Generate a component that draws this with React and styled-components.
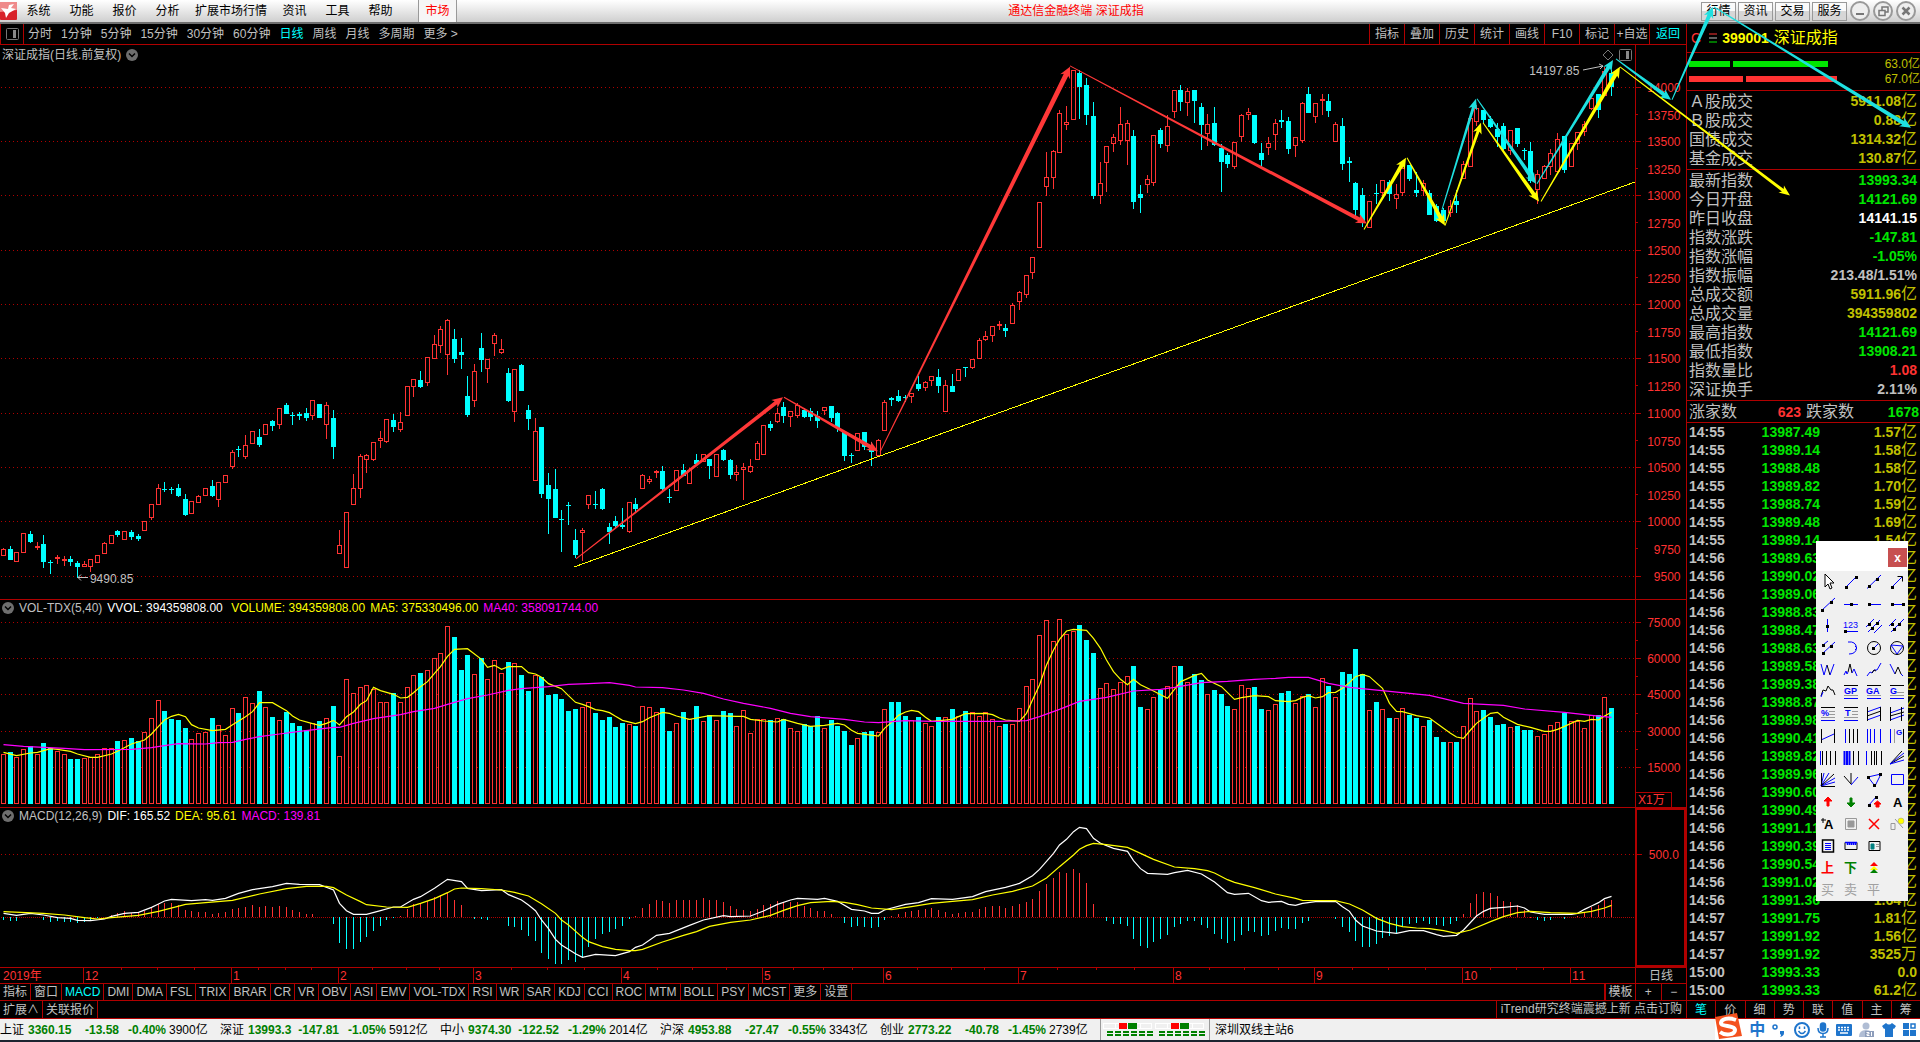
import React from 'react'
import styled, { createGlobalStyle } from 'styled-components'

const GlobalStyle = createGlobalStyle`
    *{
        box-sizing:border-box;
    }
    html, body, #root{
        height:100%;
        margin:0;
    }
    body{
        background:#000;
        color:#c0c0c0;
        font:12px/16px "Liberation Sans", "Noto Sans CJK SC", sans-serif;
        font-kerning:none;
        overflow:hidden;
    }
    button{
        font:inherit;
        font-kerning:none;
        color:inherit;
        background:none;
        border:0;
        padding:0;
        margin:0;
        white-space:nowrap;
    }
    a{
        color:inherit;
        text-decoration:none;
    }
    svg{
        display:block;
    }
`;

const RED = '#ff3232'
const LINE = '#b00000'
const CYAN = '#00ffff'
const OLIVE = '#c0c000'
const GREEN = '#00e600'
const GREY = '#c0c0c0'

/* ---------- data ---------- */

// r = up bar, c = down bar, number is the top of the volume column
const volumes = `r492 c486 r501 r478 c470 r492 c459 c474 r485 r492 c507 c507 r505 r503 r492 r475 r475 c453 r451 c444
c453 r427 r386 r331 c363 c387 c390 c414 r448 r430 r427 c384 r406 r436 r355 c369 r322 r340 c303 r352
c381 r391 c366 c399 c408 c421 r400 c393 r385 c348 r499 r268 r310 r292 r286 r298 r337 r337 c309 r337
r292 r256 c249 r241 r205 r190 r109 c141 c240 c195 r253 c204 r268 r211 r250 c216 r220 c255 c303 r256
c261 c315 c312 c327 c363 c357 r352 r337 c369 c390 c381 c411 c399 r403 c408 r349 r352 r367 c354 c423
r400 c366 r388 c348 r394 c376 r391 c363 c369 r409 r361 r430 r388 r388 c391 r385 c387 r415 r424 c403
c410 c378 r415 c390 c408 c423 c465 r445 c426 c423 r427 r358 c336 c336 c378 r391 c381 r400 r409 c381
r382 c357 r380 c363 r367 r379 r367 r388 r409 c402 r403 r355 r289 r268 r136 r91 r154 r88 r133 r124
c105 c150 c189 r295 r280 r298 r277 r259 c228 c351 r358 r322 c300 r289 r229 c228 r277 c252 c270 r313
c300 c312 c348 r358 r286 r295 c291 c357 r361 r343 c309 c303 r340 r319 c312 r352 r265 c288 r322 c246
c252 c177 c253 r361 c336 r358 c384 r385 r355 c375 c384 r409 c390 c441 c456 r457 c456 r409 r325 r364
c360 c381 c405 c402 r412 c408 c420 c420 r439 r433 r406 r397 c369 r394 r394 r415 r376 c375 r322 c354`
    .split(/\s+/)
    .map((v) => ({ up: v[0] === 'r', top: Number(v.slice(1)) }))

// high,open/close top,bottom,low for each bar; every block has its own origin
const candleBlocks = [
    [300, `744,748,767,767 738,747,780,780 757,757,785,785 700,700,758,758 693,702,726,729 726,738,741,750 705,732,786,804
780,786,789,822 765,771,776,792 768,779,782,798 768,777,786,798 783,789,801,834 783,792,798,801 778,778,800,816
766,766,788,788 726,730,759,762 706,706,731,731 690,693,705,711 694,694,717,720 690,696,711,720 702,708,717,723
664,664,692,692 613,613,653,660 552,565,614,614 546,567,570,576 561,567,570,582 552,564,588,591 582,597,645,648
604,604,641,641 585,589,608,608 565,565,587,590 540,558,588,591 547,547,599,621 526,526,548,548 450,457,500,507
438,447,450,471 405,436,470,477 394,394,431,431 387,411,435,441 373,373,404,404 360,363,378,393 325,325,374,387
309,315,342,342 336,345,348,375 336,342,348,360 324,339,354,363 301,301,347,360 312,312,354,354 306,316,374,417
330,354,441,477 690,736,761,761 637,637,803,803 522,565,614,614 462,469,566,594 462,466,479,519 427,427,479,483
393,415,422,444 358,358,425,429 342,360,381,396 336,367,389,396 259,259,347,347 238,238,260,291 213,240,261,264
172,172,248,258 105,133,176,176 78,88,137,159 57,61,164,225 87,117,177,189 114,156,165,207 228,288,345,351
192,213,302,321 99,144,180,216 178,178,206,249 99,106,131,168 117,148,158,162 204,219,303,306 208,208,335,366
192,195,273,273 315,330,357,390 354,394,542,542 381,381,582,594 519,555,597,702 507,567,654,654 630,657,660,756
606,615,618,675 687,720,765,774 684,691,698,783 586,586,612,627 573,612,615,627 564,567,627,630 669,681,696,732
648,663,678,684 624,675,681,687 607,607,695,699 594,612,627,640`],
    [360, `342,346,384,387 348,357,364,372 330,333,338,354 318,333,387,396 387,411,414,429 331,331,390,393 312,330,348,348
325,331,369,372 282,300,312,312 283,283,305,305 297,297,318,357 283,283,348,351 267,270,300,303 297,300,345,357
315,336,342,363 309,322,328,420 297,319,335,339 243,250,299,299 196,196,284,284 183,192,204,213 144,160,185,189
126,141,168,189 154,154,170,201 130,136,167,174 144,150,171,174 144,153,171,183 153,168,183,204 142,142,152,165
138,138,174,186 156,159,204,216 213,216,288,303 279,287,290,309 220,220,272,272 216,216,261,270 246,264,276,318
237,241,286,286 120,127,212,212 111,114,120,138 90,108,123,126 105,112,115,126 100,100,110,129 48,72,87,93
63,67,83,93 49,49,62,78 27,51,78,99 60,76,155,155 42,78,96,96 28,28,60,63 21,21,24,51`],
    [40, `958,958,983,987 894,901,956,956 873,889,899,903 859,859,887,906 843,853,856,870 852,864,873,891 789,796,851,851
753,757,785,810 706,706,764,774 652,652,698,717 487,487,623,623 336,412,440,468 330,334,413,447 210,220,338,338
198,246,252,270 91,91,239,239 90,99,141,237 114,135,225,255 186,228,468,477 366,430,467,492 319,319,368,456
282,292,311,336 201,253,302,315 240,250,302,375 270,288,486,507 435,462,474,519 405,418,434,459 286,286,428,438
264,270,312,324 225,259,317,336`],
    [50, `121,121,185,204 105,120,156,183 114,124,158,198 120,120,153,219 159,171,225,300 192,223,251,288 171,219,285,288
282,294,336,426 309,315,342,354 277,277,350,357 192,196,260,276 174,187,194,210 195,195,279,282 279,309,330,348
261,280,293,315 207,220,254,300 180,210,216,234 201,213,297,312 262,262,287,321 156,160,272,279 111,132,189,189
160,160,200,219 132,148,151,195 132,153,183,201 217,223,275,275 204,228,342,360 321,333,339,396 396,399,480,498
414,435,513,531 454,454,533,533 402,429,432,462 391,391,428,440 390,396,432,453 402,433,445,477 345,355,428,440
345,345,387,393 366,420,429,441 390,400,422,438 420,429,495,495 462,470,513,517 474,480,513,520 450,469,488,501
420,453,465,489 333,343,386,386 205,205,350,350 165,175,215,230 180,180,210,222 198,207,231,234 219,237,261,291
219,228,297,300 241,241,301,315 234,234,282,291 294,300,305,330 276,303,393,400 360,374,419,462 345,349,386,386
297,310,350,375 249,268,364,364 258,258,360,369 280,280,350,350 247,247,280,300 213,223,245,258 145,145,176,180
132,132,180,204 52,65,135,135 60,69,111,138`],
]

const candles = candleBlocks.flatMap(([origin, rows]) =>
    rows.split(/\s+/).map((row) => row.split(',').map((n) => origin * 3 + Number(n)))
)

const macdBars = `991 993 993 982 982 982 991 996 993 996 996 999 996 993 985 982 974 970 963 968 967 963 955 943 940 940 946 960
963 966 966 972 969 966 957 954 951 945 951 948 951 948 951 960 966 972 972 982 982 1002 1059 1077 1077 1056 1041 1023
1008 990 984 978 957 942 942 933 921 915 909 930 945 982 987 987 990 982 982 1008 1011 1020 1038 1053 1089 1107 1122 1122
1110 1116 1101 1071 1047 1032 1026 1017 1008 987 978 954 942 930 933 939 930 930 930 930 924 930 930 936 948 957 960 963
957 945 942 933 936 936 936 948 954 963 963 972 982 999 1011 1008 1011 1014 1011 990 978 972 966 963 960 957 954 960 966
972 969 966 966 957 951 948 948 954 948 942 936 927 903 882 864 846 849 837 849 879 942 982 993 1002 1002 1008 1047 1068
1074 1056 1047 1035 1011 1002 993 993 1005 1014 1032 1047 1059 1053 1035 1023 1026 1038 1035 1023 1014 1017 1017 999 993
982 982 982 987 1011 1026 1053 1071 1071 1062 1044 1038 1029 1011 1002 999 993 1002 1005 1008 1002 993 972 939 912 906
909 918 933 936 945 960 981 990 993 990 982 987 982 979 967 951 945 930 930`.split(/\s+/).map(Number)

// "bar index,level" pairs
const ma5 = `0,487 2,497 4,489 5,487 7,476 8,478 10,484 11,492 13,502 14,502 16,492 17,484 19,462 21,450 22,432 23,409 24,390
25,379 26,373 27,380 28,404 29,414 31,422 33,418 34,404 36,380 37,365 38,338 40,338 42,362 43,378 44,390 46,401 47,406
48,400 49,391 50,405 51,380 52,366 53,343 54,332 55,292 56,302 58,313 59,324 60,322 61,308 62,290 63,275 64,250 65,230
66,199 67,178 69,176 71,208 72,232 73,226 74,238 75,230 77,230 78,248 79,252 80,262 81,281 83,296 84,317 85,337 86,343
87,350 88,359 89,362 90,368 91,379 92,391 94,401 95,395 96,383 98,367 99,370 100,378 102,388 105,377 109,379 110,379
111,388 113,393 115,396 116,388 118,400 120,409 122,406 124,400 125,405 126,421 127,430 130,438 131,415 132,397 133,376
134,366 135,361 136,365 137,382 138,394 141,388 142,380 143,371 146,370 147,374 148,384 149,390 151,394 152,370 153,330
154,285 155,225 156,180 157,148 158,123 159,118 161,121 162,145 163,175 164,210 165,245 166,268 167,284 168,268 169,284
171,303 173,325 175,275 176,266 177,256 178,250 179,270 181,290 183,328 184,323 186,317 188,320 189,332 191,335 192,332
193,322 194,317 195,324 196,320 197,308 198,307 199,295 200,278 201,260 202,253 203,260 205,295 206,340 207,364 208,365
210,377 212,384 214,415 215,430 216,441 217,445 218,420 219,400 220,385 221,370 222,367 223,382 225,403 227,412 229,424
230,424 231,418 232,409 234,391 235,394 236,388 237,390 238,378 239,367`
const ma40 = `0,464 3,469 9,475 12,479 19,478 22,473 24,467 26,461 30,462 32,458 34,457 36,448 38,440 41,432 44,424 49,412
50,412 52,400 55,386 59,374 61,365 64,355 66,343 69,326 72,315 75,301 77,296 81,290 84,283 87,281 90,278 93,286 94,291
98,293 101,300 104,310 107,327 110,340 114,355 117,370 120,380 125,388 128,396 130,398 134,392 138,394 148,394 152,392
154,380 157,358 160,334 164,322 168,303 172,298 174,292 178,278 182,274 186,268 189,265 191,262 194,262 197,280 200,292
203,298 206,304 209,310 212,316 214,326 217,340 223,346 226,357 232,367 236,376 239,382`
const dif = `0,970 2,976 4,970 6,975 8,983 10,985 11,991 13,992 15,987 16,979 18,970 20,967 22,952 23,942 24,933 25,928 28,932
30,929 31,931 33,925 35,910 37,899 40,890 42,880 44,883 47,884 49,900 50,940 51,962 52,973 54,973 56,962 58,951 59,951
61,928 62,920 64,895 66,868 68,875 69,895 71,902 74,899 75,914 77,930 78,945 79,962 80,990 81,1016 82,1048 83,1065
85,1091 86,1102 88,1093 91,1097 93,1085 94,1072 95,1065 97,1036 99,1030 102,1006 104,990 107,977 108,980 111,978 113,963
115,943 117,930 118,925 121,928 122,925 124,934 126,958 128,963 129,970 130,970 131,960 134,943 136,938 138,926 141,928
144,920 146,905 149,892 151,880 153,857 154,838 156,790 157,765 158,748 159,725 160,712 161,716 162,745 163,760 165,775
167,784 168,812 169,836 170,850 173,853 174,848 176,841 178,852 180,876 182,908 183,913 185,910 187,932 188,937 190,934
191,943 192,946 193,940 195,935 198,934 199,950 200,964 201,990 202,1008 204,1023 207,1030 209,1022 211,1022 213,1034
214,1039 216,1036 217,1020 219,978 220,964 221,955 223,952 225,948 226,954 227,966 229,973 233,973 234,970 235,958
236,948 237,938 238,926 239,919`
const dea = `0,965 6,970 9,975 12,983 14,987 16,983 20,976 23,964 27,943 30,938 34,931 38,912 42,896 45,889 48,889 49,893
51,915 53,935 54,944 57,951 60,952 62,940 64,926 66,908 67,897 68,894 71,896 74,900 76,907 78,918 80,941 82,970 83,990
84,1005 86,1042 87,1055 89,1070 91,1078 93,1082 94,1082 95,1078 98,1056 101,1036 103,1025 105,1009 108,997 111,990
114,976 116,961 118,947 120,938 123,934 125,937 127,944 129,954 132,959 135,950 138,940 141,934 144,929 147,915 150,904
153,888 155,864 157,830 159,795 160,778 161,767 162,760 164,764 167,772 169,790 171,808 174,831 177,836 179,842 180,849
182,869 183,877 186,893 189,912 192,925 193,931 198,932 200,942 202,960 204,985 206,1000 208,1010 210,1014 212,1016
214,1022 216,1030 218,1020 221,995 223,980 225,968 227,964 230,968 234,970 236,964 238,954 239,946`

const menus = ['系统', '功能', '报价', '分析', '扩展市场行情', '资讯', '工具', '帮助']
const periods = ['分时', '1分钟', '5分钟', '15分钟', '30分钟', '60分钟', '日线', '周线', '月线', '多周期', '更多 >']
const tools = ['指标', '叠加', '历史', '统计', '画线', 'F10', '标记', '+自选', '返回']
const months = [
    ['2019年', 83], ['12', 148], ['1', 107], ['2', 135], ['3', 148], ['4', 141], ['5', 121],
    ['6', 135], ['7', 155], ['8', 141], ['9', 148], ['10', 108], ['11', 65],
]
const indicators = ['指标', '窗口', 'MACD', 'DMI', 'DMA', 'FSL', 'TRIX', 'BRAR', 'CR', 'VR', 'OBV', 'ASI', 'EMV', 'VOL-TDX',
    'RSI', 'WR', 'SAR', 'KDJ', 'CCI', 'ROC', 'MTM', 'BOLL', 'PSY', 'MCST', '更多', '设置']

const turnover = [
    ['Ａ股成交', '5911.08', OLIVE, '亿'],
    ['Ｂ股成交', '0.88', OLIVE, '亿'],
    ['国债成交', '1314.32', OLIVE, '亿'],
    ['基金成交', '130.87', OLIVE, '亿'],
]
const summary = [
    ['最新指数', '13993.34', GREEN],
    ['今日开盘', '14121.69', GREEN],
    ['昨日收盘', '14141.15', '#fff'],
    ['指数涨跌', '-147.81', GREEN],
    ['指数涨幅', '-1.05%', GREEN],
    ['指数振幅', '213.48/1.51%', GREY],
    ['总成交额', '5911.96', OLIVE, '亿'],
    ['总成交量', '394359802', OLIVE],
    ['最高指数', '14121.69', GREEN],
    ['最低指数', '13908.21', GREEN],
    ['指数量比', '1.08', RED],
    ['深证换手', '2.11%', GREY],
]
const trades = [
    ['14:55', '13987.49', '1.57', '亿'], ['14:55', '13989.14', '1.58', '亿'], ['14:55', '13988.48', '1.58', '亿'],
    ['14:55', '13989.82', '1.70', '亿'], ['14:55', '13988.74', '1.59', '亿'], ['14:55', '13989.48', '1.69', '亿'],
    ['14:55', '13989.14', '1.54', '亿'],
    ...['13989.63', '13990.02', '13989.06', '13988.83', '13988.47', '13988.63', '13989.58', '13989.38', '13988.87',
        '13989.98', '13990.41', '13989.82', '13989.96', '13990.60', '13990.49', '13991.11', '13990.39', '13990.54',
        '13991.02'].map((p) => ['14:56', p, '', '亿']),
    ['14:56', '13991.36', '1.64', '亿'],
    ['14:57', '13991.75', '1.81', '亿'], ['14:57', '13991.92', '1.56', '亿'], ['14:57', '13991.92', '3525', '万'],
    ['15:00', '13993.33', '0.0', ''], ['15:00', '13993.33', '61.2', '亿'],
]
const quotes = [
    ['上证', '3360.15', '-13.58', '-0.40%', '3900亿'],
    ['深证', '13993.3', '-147.81', '-1.05%', '5912亿'],
    ['中小', '9374.30', '-122.52', '-1.29%', '2014亿'],
    ['沪深', '4953.88', '-27.47', '-0.55%', '3343亿'],
    ['创业', '2773.22', '-40.78', '-1.45%', '2739亿'],
]

/* ---------- layout ---------- */

const Screen = styled.div`
    position:relative;
    height:100vh;
    display:flex;
    flex-direction:column;
    border-bottom:2px solid #1c2430;
`;
const MenuBar = styled.header`
    height:24px;
    flex:none;
    display:flex;
    align-items:center;
    background:linear-gradient(#fff, #ececec 40%, #cfcfcf);
    border-bottom:2px solid #6e6e6e;
    color:#000;
`;
const Logo = styled.svg`
    width:17px;
    height:18px;
`;
const MenuButton = styled.button`
    min-width:43px;
    padding:0 6px;
`;
const MarketTab = styled.button`
    height:22px;
    width:39px;
    margin-left:16px;
    color:#f00;
    background:#f6f6f6;
    border-left:1px solid #999;
    border-right:1px solid #999;
`;
const Title = styled.h1`
    flex:1;
    margin:0;
    padding-right:6px;
    font-size:12px;
    font-weight:normal;
    text-align:center;
    color:#f00;
`;
const HeaderButtons = styled.div`
    display:flex;
    align-items:center;
    gap:2px;
    padding-right:4px;
`;
const HeaderButton = styled.button`
    width:35px;
    height:19px;
    border:1px solid #999;
    background:linear-gradient(#fafafa 50%, #d6d6d6 50%);
`;
const WindowButton = styled.button`
    width:20px;
    height:20px;
    margin-left:1px;
    border:2px solid #999;
    border-radius:50%;
    background:#eee;
    svg{
        width:16px;
        height:16px;
    }
`;
const Main = styled.main`
    flex:1;
    min-height:0;
    display:grid;
    grid-template-columns:minmax(0,1fr) 234px;
`;
const Left = styled.div`
    min-height:0;
    min-width:0;
    display:flex;
    flex-direction:column;
`;
const Toolbar = styled.nav`
    height:21px;
    flex:none;
    display:flex;
    align-items:center;
    border-bottom:1px solid ${LINE};
`;
const PanelToggle = styled.button`
    width:24px;
    height:20px;
    display:grid;
    place-items:center;
    border-left:1px solid ${LINE};
    border-right:1px solid ${LINE};
`;
const Periods = styled.div`
    flex:1;
    display:flex;
    gap:9px;
    padding-left:4px;
`;
const TextButton = styled.button`
    color:${(p) => (p.$active ? CYAN : GREY)};
`;
const ToolButton = styled(TextButton)`
    width:35px;
    height:20px;
    border-left:1px solid ${LINE};
    &:last-child{
        width:37px;
    }
`;
const Panel = styled.section`
    flex:${(p) => p.$grow} 1 0;
    min-height:0;
    display:grid;
    grid-template-columns:minmax(0,1fr) 51px;
    border-bottom:1px solid ${LINE};
`;
const Plot = styled.div`
    min-height:0;
    display:flex;
    flex-direction:column;
`;
const Legend = styled.div`
    height:${(p) => p.$height}px;
    flex:none;
    display:flex;
    align-items:center;
    gap:5px;
    padding:0 3px 0 2px;
    white-space:pre;
`;
const Value = styled.span`
    color:${(p) => p.$color};
`;
const Spacer = styled.span`
    flex:1;
`;
const ChartSvg = styled.svg`
    flex:1;
    min-height:0;
    width:100%;
    overflow:visible;
    font-size:12px;
`;
const Axis = styled.div`
    min-height:0;
    display:flex;
    border:${(p) => (p.$boxed ? 2 : 0)}px solid ${LINE};
    border-left:${(p) => (p.$boxed ? 2 : 1)}px solid ${LINE};
    svg{
        flex:1;
        width:100%;
        height:100%;
        overflow:visible;
        font-size:12px;
    }
`;
const UnitBox = styled.div`
    align-self:end;
    margin-right:auto;
    padding:0 6px 0 3px;
    line-height:14px;
    color:${RED};
    border:1px solid ${LINE};
    border-width:1px 1px 0 0;
`;
const AxisStack = styled.div`
    min-height:0;
    display:grid;
    > *{
        grid-area:1 / 1;
    }
`;
const Row = styled.div`
    height:${(p) => p.$height}px;
    flex:none;
    display:flex;
    align-items:stretch;
    border-bottom:1px solid ${LINE};
`;
const Months = styled.div`
    flex:1;
    display:grid;
    grid-template-columns:${months.map(([, span]) => `minmax(0,${span}fr)`).join(' ')};
`;
const Month = styled.span`
    padding-left:${(p) => (p.$first ? 3 : 1)}px;
    line-height:16px;
    color:${RED};
    border-left:${(p) => (p.$first ? 0 : 1)}px solid ${LINE};
    background:${(p) => (p.$plain ? 'none' : [25, 50, 75].map((x) => `linear-gradient(${LINE}, ${LINE}) ${x}% 0 / 1px 2px no-repeat`).join(','))};
`;
const RowEnd = styled.span`
    width:51px;
    flex:none;
    display:flex;
    justify-content:center;
    align-items:center;
    border-left:1px solid ${LINE};
`;
const Tab = styled(TextButton)`
    padding:0 3px;
    border-right:1px solid ${LINE};
`;
const TemplateTab = styled.button`
    width:31px;
    margin-left:auto;
    border-left:2px solid ${LINE};
`;
const ZoomButton = styled.button`
    flex:1;
    height:100%;
    & + &{
        border-left:1px solid ${LINE};
    }
`;
const Promo = styled.a`
    margin-left:auto;
    padding:0 4px;
    border-left:1px solid ${LINE};
`;

const Side = styled.aside`
    min-height:0;
    display:flex;
    flex-direction:column;
    border-left:1px solid ${LINE};
    border-bottom:1px solid ${LINE};
    font-size:14px;
    > *{
        flex:none;
    }
`;
const SideTitle = styled.h2`
    height:29px;
    margin:0;
    padding-left:4px;
    display:flex;
    align-items:center;
    gap:5px;
    font-size:14px;
    color:#ff0;
    border-bottom:1px solid ${LINE};
    svg{
        margin-left:3px;
    }
    span{
        font-size:16px;
        font-weight:normal;
    }
`;
const Mark = styled.i`
    color:${RED};
    font-style:normal;
    font-weight:normal;
`;
const Depth = styled.div`
    height:38px;
    display:flex;
    flex-direction:column;
    justify-content:center;
    padding-left:2px;
    border-bottom:1px solid ${LINE};
`;
const DepthRow = styled.div`
    display:flex;
    align-items:center;
    gap:3px;
    font-size:12px;
    line-height:15px;
    color:${OLIVE};
    span{
        margin-left:auto;
    }
`;
const DepthBar = styled.i`
    height:6px;
    width:${(p) => p.$width}px;
    background:${(p) => p.$color};
`;
const Stats = styled.dl`
    margin:0;
    padding:1px 3px 1px 2px;
    border-bottom:1px solid ${LINE};
    div{
        height:19px;
        display:flex;
        justify-content:space-between;
        line-height:19px;
    }
    dt{
        font-size:16px;
    }
    dd{
        margin:0;
        font-weight:bold;
    }
`;
const Unit = styled.span`
    font-size:16px;
    font-weight:normal;
    line-height:16px;
`;
const Breadth = styled.div`
    height:22px;
    padding:0 1px 0 2px;
    display:grid;
    grid-template-columns:auto 69px auto 1fr;
    align-items:center;
    border-bottom:1px solid ${LINE};
    > span{
        font-size:16px;
    }
    b{
        text-align:right;
    }
    b:first-of-type{
        padding-right:5px;
    }
`;
const TradeTable = styled.table`
    width:100%;
    border-collapse:collapse;
    font-weight:bold;
    td{
        height:18px;
        padding:0;
        line-height:16px;
        text-align:right;
        color:${OLIVE};
    }
    td:first-child{
        width:60px;
        padding-left:2px;
        text-align:left;
        color:${GREY};
    }
    td:nth-child(2){
        width:73px;
        color:${GREEN};
    }
    td:last-child{
        padding-right:3px;
    }
`;
const SideTabs = styled.div`
    margin-top:auto;
    height:18px;
    display:flex;
    font-size:12px;
    border-top:1px solid ${LINE};
    button{
        flex:1;
    }
    button + button{
        border-left:1px solid ${LINE};
    }
`;

const StatusBar = styled.footer`
    height:21px;
    flex:none;
    display:flex;
    align-items:center;
    color:#000;
    background:#f0f0f0;
`;
const Quote = styled.div`
    flex:none;
    display:grid;
    grid-template-columns:28px 46px 45px 47px 54px;
    white-space:nowrap;
    b{
        color:#008000;
        text-align:right;
    }
    b:first-of-type{
        text-align:left;
    }
    span:last-child{
        padding-left:3px;
    }
`;
const Signals = styled.div`
    height:21px;
    padding:4px 3px 0 2px;
    border-left:1px solid #999;
    border-right:1px solid #999;
    margin-right:5px;
`;
const ImeBar = styled.div`
    margin-left:auto;
    height:21px;
    display:flex;
    align-items:center;
    justify-content:space-between;
    gap:6px;
    width:205px;
    padding-right:4px;
    background:#fff;
    color:#1f75cc;
    svg{
        overflow:visible;
    }
    b{
        font-size:16px;
    }
`;

const Drawings = styled.svg`
    position:absolute;
    inset:0;
    width:100%;
    height:100%;
    pointer-events:none;
`;
const Palette = styled.div`
    position:absolute;
    top:541px;
    right:12px;
    width:92px;
    background:#f0f0f0;
`;
const PaletteHead = styled.div`
    height:30px;
    padding:7px 1px;
    display:flex;
    justify-content:flex-end;
    background:#fff;
`;
const CloseButton = styled.button`
    width:19px;
    height:19px;
    background:#c75050;
    color:#fff;
    font-weight:bold;
    line-height:14px;
`;
const PaletteGrid = styled.div`
    display:grid;
    grid-template-columns:repeat(4, 1fr);
    grid-auto-rows:22px;
    button{
        display:grid;
        place-items:center;
    }
    svg{
        width:20px;
        height:20px;
        font:bold 9px/1 "Liberation Sans", sans-serif;
    }
`;
const OrderButton = styled.button`
    color:${(p) => p.$color};
    font-size:13px;
    font-weight:${(p) => (p.$bold ? 'bold' : 'normal')};
`;

/* ---------- charts ---------- */

const barX = (i) => Math.round(3 + i * 6.728)

const GridLine = ({ y, dense }) => (
    <line x1="1" x2="1635" y1={y + 0.5} y2={y + 0.5} stroke="#b00000" strokeDasharray={dense ? '1 1' : '1 3'} shapeRendering="crispEdges" />
)

const Curve = ({ data, color, top }) => (
    <polyline
        fill="none"
        stroke={color}
        strokeWidth="1.2"
        points={data.split(/\s+/).map((p) => {
            const [i, y] = p.split(',').map(Number)
            return `${barX(i) + 0.5},${590 + y / 3 - top}`
        }).join(' ')}
    />
)

// the plotted data stretches with the panel, texts given as "over" do not
function Chart({ height, over, children }) {
    return (
        <ChartSvg>
            <svg width="100%" height="100%" viewBox={`0 0 1635 ${height}`} preserveAspectRatio="none" overflow="visible">
                {children}
            </svg>
            {over}
        </ChartSvg>
    )
}

function Candles({ top }) {
    return candles.map(([h, t, b, l], i) => {
        const x = barX(i)
        const px = (v) => Math.floor(v / 3) - top
        const { up } = volumes[i]
        if (up) {
            return (
                <g key={i} fill="none" stroke={RED} shapeRendering="crispEdges">
                    {h < t && <line x1={x + 0.5} x2={x + 0.5} y1={px(h)} y2={px(t)} />}
                    {l > b && <line x1={x + 0.5} x2={x + 0.5} y1={px(b)} y2={px(l)} />}
                    <rect x={x - 1.5} y={px(t) + 0.5} width="4" height={Math.max(px(b) - px(t), 0.1)} />
                </g>
            )
        }
        return (
            <g key={i} fill={CYAN} shapeRendering="crispEdges">
                <rect x={x} y={px(h)} width="1" height={Math.max(px(l) - px(h), 1)} />
                <rect x={x - 2} y={px(t)} width="5" height={Math.max(px(b) - px(t), 1)} />
            </g>
        )
    })
}

function VolumeBars({ top }) {
    return volumes.map((v, i) => {
        const x = barX(i)
        const y = 590 + Math.floor(v.top / 3) - top
        const bottom = 804 - top
        return v.up
            ? <rect key={i} x={x - 1.5} y={y + 0.5} width="4" height={bottom - y - 1} fill="#000" stroke={RED} shapeRendering="crispEdges" />
            : <rect key={i} x={x - 2} y={y} width="5" height={bottom - y} fill={CYAN} shapeRendering="crispEdges" />
    })
}

function MacdBars({ top }) {
    const zero = 917 - top
    return macdBars.map((v, i) => {
        if (v === 982) return null
        const end = 590 + Math.round(v / 3) - top
        return (
            <rect
                key={i}
                x={barX(i)}
                y={Math.min(zero, end)}
                width="1"
                height={Math.max(Math.abs(end - zero), 1)}
                fill={v < 982 ? RED : CYAN}
                shapeRendering="crispEdges"
            />
        )
    })
}

function Scale({ height, ticks }) {
    const pct = (v) => `${(v / height) * 100}%`
    return (
        <svg>
            {ticks.map(([y, label, minor]) => (
                <g key={y}>
                    <line x1="0" x2={minor ? 2 : 5} y1={pct(y + 0.5)} y2={pct(y + 0.5)} stroke={LINE} shapeRendering="crispEdges" />
                    {label && <text x="89%" y={pct(y + (minor ? 6 : 5))} textAnchor="end" fill={RED}>{label}</text>}
                </g>
            ))}
        </svg>
    )
}

const majors = [87, 141, 195, 250, 304, 358, 413, 467, 521, 576]
const priceTicks = majors.flatMap((y, i) => {
    const price = 14000 - i * 500
    const rows = [[y - 45, String(price)]]
    if (i < 9) rows.push([y - 45 + 27, String(price - 250), true])
    return rows
})
const volumeTicks = [
    [22, '75000'], [40, '', true], [58, '60000'], [76, '', true], [94, '45000'],
    [113, '', true], [131, '30000'], [149, '', true], [167, '15000'],
]

const Chevron = () => (
    <svg width="12" height="12" viewBox="0 0 12 12">
        <circle cx="6" cy="6" r="6" fill="#6e6e6e" />
        <path d="M3 4.5 6 7.5 9 4.5" fill="none" stroke="#000" strokeWidth="1.5" />
    </svg>
)
const SplitIcon = () => (
    <svg width="13" height="12" viewBox="0 0 13 12">
        <rect x=".5" y=".5" width="12" height="11" rx="1" fill="none" stroke="#777" />
        <rect x="7" y="2" width="3" height="8" fill="#888" />
    </svg>
)

/* ---------- trend drawings ---------- */

// from is the thin tail, to is the tip
function Arrow({ from: [x1, y1], to: [x2, y2], color, width = 4 }) {
    const len = Math.hypot(x2 - x1, y2 - y1)
    const ux = (x2 - x1) / len
    const uy = (y2 - y1) / len
    const at = (d, side) => `${x1 + ux * d - uy * side},${y1 + uy * d + ux * side}`
    const neck = len - 9
    const w = width / 2
    return (
        <polygon
            fill={color}
            points={[
                at(0, 0.5), at(neck, w), at(neck - 2, w + 3), at(len, 0), at(neck - 2, -w - 3), at(neck, -w), at(0, -0.5),
            ].join(' ')}
        />
    )
}

const arrows = [
    ['#ff3838', 4, [[576, 560], [783, 398]]],
    ['#ff3838', 4, [[784, 398], [878, 452]]],
    ['#ff3838', 5, [[880, 453], [1070, 67]]],
    ['#ff3838', 4, [[1070, 66], [1367, 224]]],
    ['#1ee0e0', 3, [[1442, 210], [1476, 99]]],
    ['#1ee0e0', 4, [[1477, 99], [1536, 184]]],
    ['#1ee0e0', 4, [[1537, 184], [1613, 60]]],
    ['#1ee0e0', 4, [[1616, 59], [1671, 100]]],
    ['#1ee0e0', 4, [[1672, 100], [1713, 7]]],
    ['#1ee0e0', 4, [[1714, 7], [1911, 128]]],
    ['#ffff00', 4, [[1364, 230], [1406, 158]]],
    ['#ffff00', 4, [[1407, 158], [1445, 226]]],
    ['#ffff00', 3, [[1445, 226], [1481, 123]]],
    ['#ffff00', 4, [[1483, 123], [1539, 202]]],
    ['#ffff00', 4, [[1541, 202], [1620, 67]]],
    ['#ffff00', 3, [[1620, 67], [1790, 196]]],
]

/* ---------- drawing palette ---------- */

const B = '#0000ff'
const K = '#000'
const S = ({ d, c = B, w = 1, f = 'none' }) => <path d={d} stroke={c} strokeWidth={w} fill={f} />
const Dots = ({ at }) => at.map(([x, y]) => <rect key={`${x}-${y}`} x={x - 1} y={y - 1} width="3" height="3" fill={K} />)

const glyphs = [
    ['选择', <S d="M7 2V15L10 12 12 17 14 16 12 11H16Z" c={K} f="#fff" />],
    ['线段', <><S d="M5 15 15 5" /><Dots at={[[5, 15], [15, 5]]} /></>],
    ['直线', <><S d="M3 16.5 17 3" /><Dots at={[[5, 14], [13, 7]]} /></>],
    ['箭头', <><S d="M5 15 15 5" /><S d="M10.5 4.5H15.5V9.5" c={K} /><Dots at={[[5, 15]]} /></>],
    ['射线', <><S d="M3 17 17 4" /><Dots at={[[4, 16], [13, 8]]} /></>],
    ['水平线', <><S d="M3 10.5H17" /><Dots at={[[10, 10]]} /></>],
    ['水平射线', <><S d="M4 10.5H17" /><Dots at={[[5, 10]]} /></>],
    ['水平线段', <><S d="M4 10.5H16" /><Dots at={[[5, 10], [16, 10]]} /></>],
    ['垂直线', <><S d="M9.5 3V16" /><Dots at={[[9, 10]]} /></>],
    ['价格标签', <><text x="2" y="12" fill={B} style={{ fontWeight: 400 }}>123</text><S d="M4 15.5H17" /><Dots at={[[4, 15]]} /></>],
    ['平行线', <><S d="M2 11 10 3M4 16 16 4M10 17 18 9" /><Dots at={[[5, 8], [8, 12], [13, 7]]} /></>],
    ['平行通道', <><S d="M2 10 9 3M4 16 17 3" /><Dots at={[[5, 8], [7, 13], [12, 8]]} /></>],
    ['平行线段', <><S d="M5 7 10 3M5 15 17 4" /><Dots at={[[5, 7], [5, 15], [13, 8]]} /></>],
    ['圆弧', <><S d="M7 4Q15 3 15.5 10 15 16 8 16" /><S d="M14 8 16 10 14 12" /></>],
    ['圆', <><circle cx="10" cy="10" r="6.5" fill="none" stroke={K} /><S d="M10 10 14 6" /><Dots at={[[9, 10]]} /></>],
    ['外接圆', <><circle cx="10" cy="10" r="6.5" fill="none" stroke={K} /><S d="M4 7 16 8 10 16Z" /></>],
    ['W底', <><S d="M3 4 6 15 9 5" /><S d="M9 5 12 15" c={K} /><S d="M12 15 16 4" /></>],
    ['M头', <><S d="M3 15 5 11 6 14 7 12" /><S d="M7 12 9 4 11 13" c={K} /><S d="M11 13 13 9 16 16" /></>],
    ['上升浪', <><S d="M3 16 6 12 8 13 10 10" /><S d="M10 10 13 10 17 3" /><S d="M8 13 10 10 12 11" c={K} /></>],
    ['下降浪', <><S d="M3 4 8 14" /><S d="M8 14 11 7 14 14" c={K} /><S d="M14 14 16 16" /></>],
    ['头肩', <><S d="M3 14 5 8 8 9 10 4 13 8 15 8 17 13" c={K} /><S d="M3 15 5 10" /></>],
    ['GP', <><S d="M3 3.5H17" c={K} /><text x="3" y="12" fill={B}>GP</text><S d="M3 13.5H17" c="#999" /><S d="M3 16.5H17" /></>],
    ['GA', <><S d="M3 3.5H17" c={K} /><text x="2" y="12" fill={B}>GA</text><S d="M3 13.5H17" c="#999" /><S d="M3 16.5H17" /></>],
    ['G', <><S d="M3 3.5H17" c={K} /><text x="3" y="12" fill={B}>G</text><S d="M10 10.5H17M3 13.5H17" c="#999" /><S d="M3 16.5H17" /></>],
    ['百分比', <><S d="M3 3.5H17" c={K} /><text x="3" y="12" fill={B}>%</text><S d="M11 7.5H17M11 10.5H17M3 13.5H17" c="#999" /><S d="M3 16.5H17" /></>],
    ['时间', <><S d="M3 3.5H17" c={K} /><text x="4" y="12" fill={B}>T</text><S d="M11 7.5H17M11 10.5H17M3 13.5H17" c="#999" /><S d="M3 16.5H17" /></>],
    ['回归带', <><S d="M3 8 17 3M3 16 17 11" /><S d="M3 12 17 7M3.5 3V17M16.5 3V17" c={K} /></>],
    ['回归通道', <><S d="M3 9 17 4M3 16 17 11" /><S d="M3 12 17 8M3.5 3V17M14.5 3V17" c={K} /></>],
    ['回归线', <><S d="M3 14 16 8" /><S d="M3.5 3V17M16.5 3V17" c={K} /></>],
    ['周期线', <><S d="M4.5 3V17" /><S d="M8.5 3V17M12.5 3V17M16.5 3V17" c={K} /></>],
    ['斐波那契', <S d="M3.5 3V17M6.5 3V17M10.5 3V17M16.5 3V17" />],
    ['黄金时间', <><S d="M3.5 3V17" /><S d="M7.5 3V17" c="#999" /><S d="M16.5 3V17" c={K} /><text x="9" y="9" fill={B} style={{ fontSize: '8px' }}>G</text></>],
    ['阳历线', <><S d="M2.5 3V17" /><S d="M4.5 3V17M8.5 3V17M12.5 3V17M17.5 3V17" c={K} /></>],
    ['阴历线', <><S d="M3.5 3V17M6 3V17M8.5 3V17" w={2} /><S d="M12.5 3V17M17.5 3V17" c={K} /></>],
    ['对称线', <><S d="M2.5 3V17" /><S d="M7.5 3V17M10.5 3V17M12.5 3V17M17.5 3V17" c={K} /></>],
    ['扇形', <><S d="M3 16 15 3M3 16 17 8" c={K} /><S d="M3 16 17 12M3 16 17 5" /></>],
    ['江恩角度', <><S d="M3 16 6 3M3 16 11 3M3 16 17 8M3 16 17 12" /><S d="M3.5 3V16.5H17M3 16 16 4" c={K} /></>],
    ['速阻线', <><S d="M3 6 10 14V3" c={K} /><S d="M10 15 17 7" /></>],
    ['三角形', <><S d="M4 7 17 4 11 16Z" /><Dots at={[[4, 7], [16, 4], [10, 15]]} /></>],
    ['矩形', <S d="M4.5 4.5H16.5V14.5H4.5Z" />],
    ['上箭头', <S d="M10 5 14 9H11V14H9V9H6Z" c="#f00" f="#f00" />],
    ['下箭头', <S d="M10 15 14 11H11V6H9V11H6Z" c="#008000" f="#008000" />],
    ['标记', <><S d="M4 14 13 4" /><Dots at={[[5, 13], [12, 5]]} /><S d="M13.5 9 17 12H15V15H12V12H10Z" c="#f00" f="#f00" /></>],
    ['文字', <text x="6" y="15" fill={K} style={{ fontSize: '13px' }}>A</text>],
    ['注释', <><text x="6" y="15" fill={K} style={{ fontSize: '13px' }}>A</text><S d="M5 4V9M3 6H8" c={K} /></>],
    ['底色', <><S d="M4.5 4.5H15.5V15.5H4.5Z" c="#999" /><S d="M7 7H13V13H7Z" c="#999" f="#999" /></>],
    ['删除', <S d="M5 5 15 15M15 5 5 15" c="#f00" w={1.5} />],
    ['隐藏', <><S d="M4 9.5H8V15.5H4ZM8 5 16 14" c="#999" /><circle cx="14" cy="7" r="3" fill="#ff0" stroke="#999" strokeWidth=".5" /></>],
    ['列表', <><S d="M4.5 4V16H15.5V4Z" c={K} w={1.5} /><S d="M7 7.5H13M7 9.5H13M7 11.5H13M7 13.5H13" /></>],
    ['标尺', <><S d="M4 6.5H16V13.5H4Z" c={K} /><S d="M4 6.5H16M6.5 7V9M8.5 7V9M10.5 7V9M12.5 7V9M14.5 7V9" w={1.5} /></>],
    ['图片', <><S d="M5 5.5H16V14.5H5Z" c={K} /><S d="M7 8H10V13H7Z" c="#008080" f="#008080" /><S d="M12 8.5H15M12 10.5H15" c="#999" /></>],
    null,
]
const orderButtons = [['上', '#f00', true], ['下', '#008000', true], null, ['买', '#a0a0a0'], ['卖', '#a0a0a0'], ['平', '#a0a0a0']]

function DrawingPalette() {
    return (
        <Palette>
            <PaletteHead>
                <CloseButton aria-label="关闭">x</CloseButton>
            </PaletteHead>
            <PaletteGrid>
                {glyphs.map((g, i) => (g
                    ? <button key={i} aria-label={g[0]}><svg viewBox="0 0 20 20">{g[1]}</svg></button>
                    : <span key={i} />
                ))}
                {orderButtons.map((b, i) => (
                    <React.Fragment key={i}>
                        {b
                            ? <OrderButton $color={b[1]} $bold={b[2]}>{b[0]}</OrderButton>
                            : (
                                <button aria-label="三档">
                                    <svg viewBox="0 0 20 20">
                                        <path d="M10 4 14 8H6Z" fill="#f00" />
                                        <path d="M10 8 14 12H6Z" fill="#ff0" />
                                        <path d="M10 11 14 15H6Z" fill="#008000" />
                                    </svg>
                                </button>
                            )}
                        {i === 2 && <span />}
                    </React.Fragment>
                ))}
            </PaletteGrid>
        </Palette>
    )
}

/* ---------- page parts ---------- */

function TopMenu() {
    return (
        <MenuBar>
            <Logo viewBox="0 0 17 18">
                <rect x="0" y="0" width="17" height="18" rx="1" fill="#d8232a" />
                <path d="M0 0H17V8L0 10Z" fill="#ef8a8a" />
                <path d="M1 6 8 7 9 3 14 2 11 6 16 7 9 11 6 16 5 11Z" fill="#fff" />
            </Logo>
            {menus.map((m) => <MenuButton key={m}>{m}</MenuButton>)}
            <MarketTab>市场</MarketTab>
            <Title>通达信金融终端 深证成指</Title>
            <HeaderButtons>
                {['行情', '资讯', '交易', '服务'].map((b) => <HeaderButton key={b}>{b}</HeaderButton>)}
                <WindowButton aria-label="最小化">
                    <svg viewBox="0 0 16 16"><path d="M4 11H12" stroke="#777" strokeWidth="2" /></svg>
                </WindowButton>
                <WindowButton aria-label="还原">
                    <svg viewBox="0 0 16 16"><path d="M4 7.5H10V12.5H4ZM7 7V4H13V9H10" fill="none" stroke="#777" strokeWidth="1.5" /></svg>
                </WindowButton>
                <WindowButton aria-label="关闭窗口">
                    <svg viewBox="0 0 16 16"><path d="M4.5 4.5 11.5 11.5M11.5 4.5 4.5 11.5" stroke="#777" strokeWidth="2.5" /></svg>
                </WindowButton>
            </HeaderButtons>
        </MenuBar>
    )
}

function PricePanel() {
    const top = 65
    return (
        <Panel $grow={554}>
            <Plot>
                <Legend $height={20}>
                    <span>深证成指(日线.前复权)</span>
                    <Chevron />
                    <Spacer />
                    <svg width="12" height="12" viewBox="0 0 12 12"><path d="M6 1 11 6 6 11 1 6Z" fill="none" stroke="#777" /></svg>
                    <SplitIcon />
                </Legend>
                <Chart
                    height={534}
                    over={(
                        <>
                            <text x="5.5%" y="97%" fill={GREY}>9490.85</text>
                            <text x="96.6%" y="10" textAnchor="end" fill={GREY}>14197.85</text>
                        </>
                    )}
                >
                    {majors.map((y) => <GridLine key={y} y={y - top} />)}
                    <Candles top={top} />
                    <path d="M88 512.5H78M81 509.5 78 512.5 81 515.5M1583 5 1603 1M1599 -1 1603 1 1600 4" fill="none" stroke={GREY} />
                    <line x1="574" y1="502" x2="1635" y2="117" stroke="#ff0" shapeRendering="crispEdges" />
                </Chart>
            </Plot>
            <Axis><Scale height={554} ticks={priceTicks} /></Axis>
        </Panel>
    )
}

function VolumePanel() {
    const top = 616
    return (
        <Panel $grow={207}>
            <Plot>
                <Legend $height={16}>
                    <Chevron />
                    <span>VOL-TDX(5,40)</span>
                    <Value $color="#fff">{'VVOL: 394359808.00 '}</Value>
                    <Value $color="#ff0">VOLUME: 394359808.00</Value>
                    <Value $color="#ff0">MA5: 375330496.00</Value>
                    <Value $color="#f0f">MA40: 358091744.00</Value>
                </Legend>
                <Chart height={191}>
                    {[622, 658, 694, 731, 767].map((y) => <GridLine key={y} y={y - top} />)}
                    <VolumeBars top={top} />
                    <Curve data={ma5} color="#ff0" top={top} />
                    <Curve data={ma40} color="#f0f" top={top} />
                </Chart>
            </Plot>
            <AxisStack>
                <Axis><Scale height={207} ticks={volumeTicks} /></Axis>
                <UnitBox>X1万</UnitBox>
            </AxisStack>
        </Panel>
    )
}

function MacdPanel() {
    const top = 824
    return (
        <Panel $grow={159}>
            <Plot>
                <Legend $height={16}>
                    <Chevron />
                    <span>MACD(12,26,9)</span>
                    <Value $color="#fff">DIF: 165.52</Value>
                    <Value $color="#ff0">DEA: 95.61</Value>
                    <Value $color="#f0f">MACD: 139.81</Value>
                </Legend>
                <Chart height={143}>
                    <GridLine y={854 - top} />
                    <GridLine y={917 - top} dense />
                    <MacdBars top={top} />
                    <Curve data={dif} color="#fff" top={top} />
                    <Curve data={dea} color="#ff0" top={top} />
                </Chart>
            </Plot>
            <Axis $boxed><Scale height={155} ticks={[[44, '500.0']]} /></Axis>
        </Panel>
    )
}

const StatRows = ({ rows }) => (
    <Stats>
        {rows.map(([label, value, color, unit]) => (
            <div key={label}>
                <dt>{label}</dt>
                <dd><Value $color={color}>{value}{unit && <Unit>{unit}</Unit>}</Value></dd>
            </div>
        ))}
    </Stats>
)

function SidePanel() {
    return (
        <Side>
            <SideTitle>
                <Mark>C</Mark>
                <svg width="8" height="10" viewBox="0 0 8 10">
                    <path d="M0 1H8" stroke="#ff3232" />
                    <path d="M0 5H8" stroke="#c0c0c0" />
                    <path d="M0 9H8" stroke="#00e600" />
                </svg>
                399001
                <span>深证成指</span>
            </SideTitle>
            <Depth>
                <DepthRow>
                    <DepthBar $width={41} $color={GREEN} />
                    <DepthBar $width={95} $color={GREEN} />
                    <span>63.0亿</span>
                </DepthRow>
                <DepthRow>
                    <DepthBar $width={54} $color={RED} />
                    <DepthBar $width={91} $color={RED} />
                    <span>67.0亿</span>
                </DepthRow>
            </Depth>
            <StatRows rows={turnover} />
            <StatRows rows={summary} />
            <Breadth>
                <span>涨家数</span>
                <b><Value $color={RED}>623</Value></b>
                <span>跌家数</span>
                <b><Value $color={GREEN}>1678</Value></b>
            </Breadth>
            <TradeTable>
                <tbody>
                    {trades.map(([time, price, amount, unit], i) => (
                        <tr key={i}>
                            <td>{time}</td>
                            <td>{price}</td>
                            <td>{amount}<Unit>{unit}</Unit></td>
                        </tr>
                    ))}
                </tbody>
            </TradeTable>
            <SideTabs>
                {['笔', '价', '细', '势', '联', '值', '主', '筹'].map((t, i) => (
                    <TextButton key={t} $active={i === 0}>{t}</TextButton>
                ))}
            </SideTabs>
        </Side>
    )
}

const SignalBlock = ({ x }) => (
    <g transform={`translate(${x} 0)`}>
        <rect x=".5" y=".5" width="48" height="5" fill="#f0f0f0" stroke="#fff" />
        <path d="M12.5 0V6M37.5 0V6" stroke="#fff" />
        <rect x="16" y="0" width="8" height="6" fill="#f00" />
        <rect x="25" y="0" width="9" height="6" fill="#008000" />
        <path d="M4 9H50M4 12H50" stroke="#008000" strokeWidth="2" strokeDasharray="6 2" />
    </g>
)

function Footer() {
    return (
        <StatusBar>
            {quotes.map(([name, price, change, pct, amount]) => (
                <Quote key={name}>
                    <span>{name}</span>
                    <b>{price}</b>
                    <b>{change}</b>
                    <b>{pct}</b>
                    <span>{amount}</span>
                </Quote>
            ))}
            <Signals>
                <svg width="103" height="14" viewBox="0 0 103 14">
                    <SignalBlock x={0} />
                    <SignalBlock x={52} />
                </svg>
            </Signals>
            <span>深圳双线主站6</span>
            <ImeBar>
                <svg width="27" height="21" viewBox="0 0 27 21">
                    <path d="M0 -2 22 -6 27 17 4 20Z" fill="#f4511e" />
                    <path d="M21 1C13-2 6 0 6 4S20 6 20 11 10 17 5 13" fill="none" stroke="#fff" strokeWidth="4" />
                </svg>
                <b>中</b>
                <svg width="14" height="14" viewBox="0 0 14 14">
                    <circle cx="3" cy="4" r="2" fill="none" stroke="currentColor" strokeWidth="1.5" />
                    <path d="M8 8H12V10Q12 13 8 14 10 12 8 11Z" fill="currentColor" />
                </svg>
                <svg width="16" height="16" viewBox="0 0 16 16" fill="none" stroke="currentColor" strokeWidth="2">
                    <circle cx="8" cy="8" r="7" />
                    <path d="M4.5 9Q8 14 11.5 9M5.5 4.5V7M10.5 4.5V7" strokeWidth="1.5" />
                </svg>
                <svg width="12" height="16" viewBox="0 0 12 16" fill="none" stroke="currentColor" strokeWidth="1.5">
                    <rect x="3.5" y="1" width="5" height="8" rx="2.5" fill="currentColor" />
                    <path d="M1 6Q1 11.5 6 11.5T11 6M6 12V15M3 15H9" />
                </svg>
                <svg width="16" height="12" viewBox="0 0 16 12">
                    <rect width="16" height="12" rx="1" fill="currentColor" />
                    <path d="M2 3.5H14M2 6H14" stroke="#fff" strokeWidth="1.5" strokeDasharray="2 1" />
                    <path d="M4 9H12" stroke="#fff" strokeWidth="1.5" />
                </svg>
                <svg width="15" height="16" viewBox="0 0 15 16" fill="#b0bdd4">
                    <circle cx="7" cy="4" r="3.5" />
                    <path d="M0 15Q0 8 7 8T14 15Z" />
                    <rect x="6" y="9" width="9" height="6" fill="#8d9dbb" />
                    <path d="M7.5 10.5H10V12H8V13.5H10.5M12.5 10V14" fill="none" stroke="#fff" />
                </svg>
                <svg width="14" height="14" viewBox="0 0 14 14">
                    <path d="M4 0Q7 3 10 0L14 3 12 6 11 5.5V14H3V5.5L2 6 0 3Z" fill="currentColor" />
                </svg>
                <svg width="13" height="13" viewBox="0 0 13 13" fill="currentColor">
                    <path d="M0 0H6V6H0ZM0 7H6V13H0ZM7 7H13V13H7Z" />
                    <path d="M8 1H12V5H8Z" fill="none" stroke="currentColor" strokeWidth="1.5" />
                </svg>
            </ImeBar>
        </StatusBar>
    )
}

export default function App() {
    return (
        <Screen>
            <GlobalStyle />
            <TopMenu />
            <Main>
                <Left>
                    <Toolbar>
                        <PanelToggle aria-label="侧栏"><SplitIcon /></PanelToggle>
                        <Periods>
                            {periods.map((p) => <TextButton key={p} $active={p === '日线'}>{p}</TextButton>)}
                        </Periods>
                        {tools.map((t) => <ToolButton key={t} $active={t === '返回'}>{t}</ToolButton>)}
                    </Toolbar>
                    <PricePanel />
                    <VolumePanel />
                    <MacdPanel />
                    <Row $height={16}>
                        <Months>
                            {months.map(([m], i) => (
                                <Month key={m} $first={i === 0} $plain={i === 0 || i === 12}>{m}</Month>
                            ))}
                        </Months>
                        <RowEnd>日线</RowEnd>
                    </Row>
                    <Row $height={17}>
                        {indicators.map((t) => <Tab key={t} $active={t === 'MACD'}>{t}</Tab>)}
                        <TemplateTab>模板</TemplateTab>
                        <RowEnd>
                            <ZoomButton aria-label="放大">+</ZoomButton>
                            <ZoomButton aria-label="缩小">−</ZoomButton>
                        </RowEnd>
                    </Row>
                    <Row $height={18}>
                        <Tab>扩展∧</Tab>
                        <Tab>关联报价</Tab>
                        <Promo href="#itrend">iTrend研究终端震撼上新 点击订购</Promo>
                    </Row>
                </Left>
                <SidePanel />
            </Main>
            <Footer />
            <Drawings viewBox="0 0 1920 1042" preserveAspectRatio="none">
                {arrows.map(([color, width, [from, to]], i) => (
                    <Arrow key={i} color={color} width={width} from={from} to={to} />
                ))}
            </Drawings>
            <DrawingPalette />
        </Screen>
    )
}
